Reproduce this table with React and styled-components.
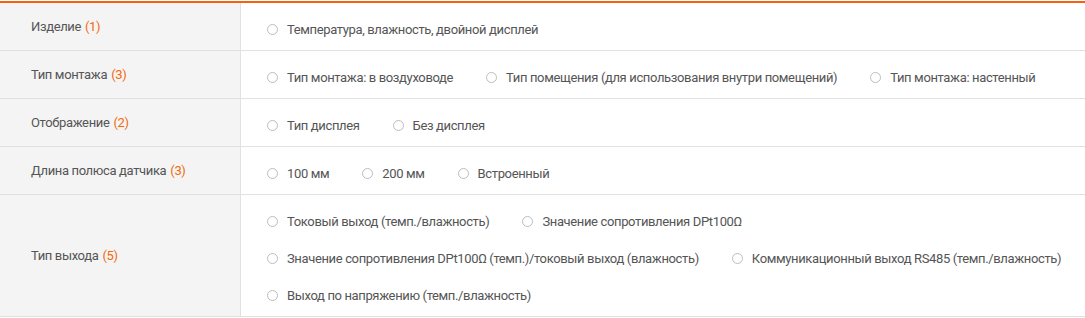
import React from "react";
import styled, { createGlobalStyle } from "styled-components";

const GlobalStyle = createGlobalStyle`
  html, body {
    margin: 0;
    padding: 0;
    background: #fff;
  }
  body {
    font-family: Roboto, "Liberation Sans", sans-serif;
    font-size: 13px;
    letter-spacing: -0.36px;
    color: #555;
  }
`;

const Table = styled.div`
  margin-top: 1px;
  border-top: 2px solid #f5620f;
  width: 1085px;
`;

const Row = styled.div`
  display: grid;
  grid-template-columns: 241px 1fr;
  border-bottom: 1px solid #e1e1e1;
`;

const Label = styled.div`
  background: #f4f4f4;
  border-right: 1px solid #e1e1e1;
  display: flex;
  align-items: center;
  padding-left: 31px;
  color: #555;
`;

const Count = styled.span`
  color: #f26a10;
  margin-left: 4px;
`;

const Options = styled.div`
  display: flex;
  flex-direction: column;
  padding: 8px 0 2px 26px;
`;

const Line = styled.div`
  display: flex;
  align-items: center;
  height: 37px;
`;

const Option = styled.label`
  display: flex;
  align-items: center;
  margin-right: 33px;
  cursor: pointer;
  white-space: nowrap;
`;

const Radio = styled.span`
  flex: none;
  width: 9px;
  height: 9px;
  border: 1px solid #bdbdbd;
  border-radius: 50%;
  margin-right: 9px;
  background: #fff;
`;

const rows = [
  { title: "Изделие", items: [["Температура, влажность, двойной дисплей"]] },
  {
    title: "Тип монтажа",
    items: [
      [
        "Тип монтажа: в воздуховоде",
        "Тип помещения (для использования внутри помещений)",
        "Тип монтажа: настенный",
      ],
    ],
  },
  { title: "Отображение", items: [["Тип дисплея", "Без дисплея"]] },
  { title: "Длина полюса датчика", items: [["100 мм", "200 мм", "Встроенный"]] },
  {
    title: "Тип выхода",
    items: [
      ["Токовый выход (темп./влажность)", "Значение сопротивления DPt100Ω"],
      [
        "Значение сопротивления DPt100Ω (темп.)/токовый выход (влажность)",
        "Коммуникационный выход RS485 (темп./влажность)",
      ],
      ["Выход по напряжению (темп./влажность)"],
    ],
  },
];

export default function App() {
  return (
    <>
      <GlobalStyle />
      <Table>
        {rows.map((row) => {
          const count = row.items.reduce((n, line) => n + line.length, 0);
          return (
            <Row key={row.title}>
              <Label>
                {row.title}
                <Count>({count})</Count>
              </Label>
              <Options>
                {row.items.map((line, i) => (
                  <Line key={i}>
                    {line.map((item) => (
                      <Option key={item}>
                        <Radio />
                        {item}
                      </Option>
                    ))}
                  </Line>
                ))}
              </Options>
            </Row>
          );
        })}
      </Table>
    </>
  );
}
